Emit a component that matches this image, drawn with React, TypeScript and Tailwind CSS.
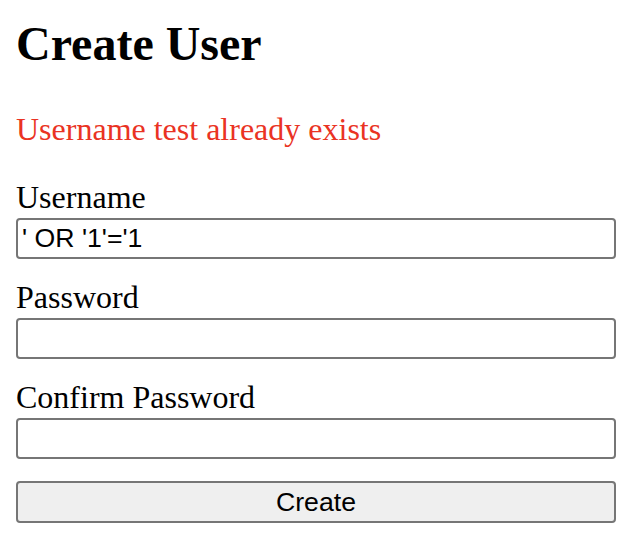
export default function App() {
  return (
    <div className="min-h-[550px] bg-white px-4 pt-4 font-['Liberation_Serif','Times_New_Roman',serif] text-black">
      <h1 className="text-[48px] font-bold leading-[55px]">Create User</h1>

      <p className="mt-[40px] text-[32px] leading-[37px] text-[#ea3323]">Username test already exists</p>

      <form className="mt-[31px] flex w-[600px] flex-col" onSubmit={(e) => e.preventDefault()}>
        <label className="block text-[32px] leading-[37px]">Username</label>
        <input
          type="text"
          defaultValue="' OR '1'='1"
          className="mt-[2px] h-[41px] w-full rounded-[4px] border-2 border-[#767676] bg-white px-[4px] font-['Liberation_Sans',Arial,sans-serif] text-[26.67px] text-black outline-none"
        />

        <label className="mt-[20px] block text-[32px] leading-[37px]">Password</label>
        <input
          type="password"
          className="mt-[2px] h-[41px] w-full rounded-[4px] border-2 border-[#767676] bg-white px-[4px] font-['Liberation_Sans',Arial,sans-serif] text-[26.67px] outline-none"
        />

        <label className="mt-[20px] block text-[32px] leading-[37px]">Confirm Password</label>
        <input
          type="password"
          className="mt-[2px] h-[41px] w-full rounded-[4px] border-2 border-[#767676] bg-white px-[4px] font-['Liberation_Sans',Arial,sans-serif] text-[26.67px] outline-none"
        />

        <button
          type="submit"
          className="mt-[22px] h-[42px] w-full rounded-[4px] border-2 border-[#767676] bg-[#efefef] font-['Liberation_Sans',Arial,sans-serif] text-[26.67px] leading-none text-black"
        >
          Create
        </button>
      </form>
    </div>
  );
}
